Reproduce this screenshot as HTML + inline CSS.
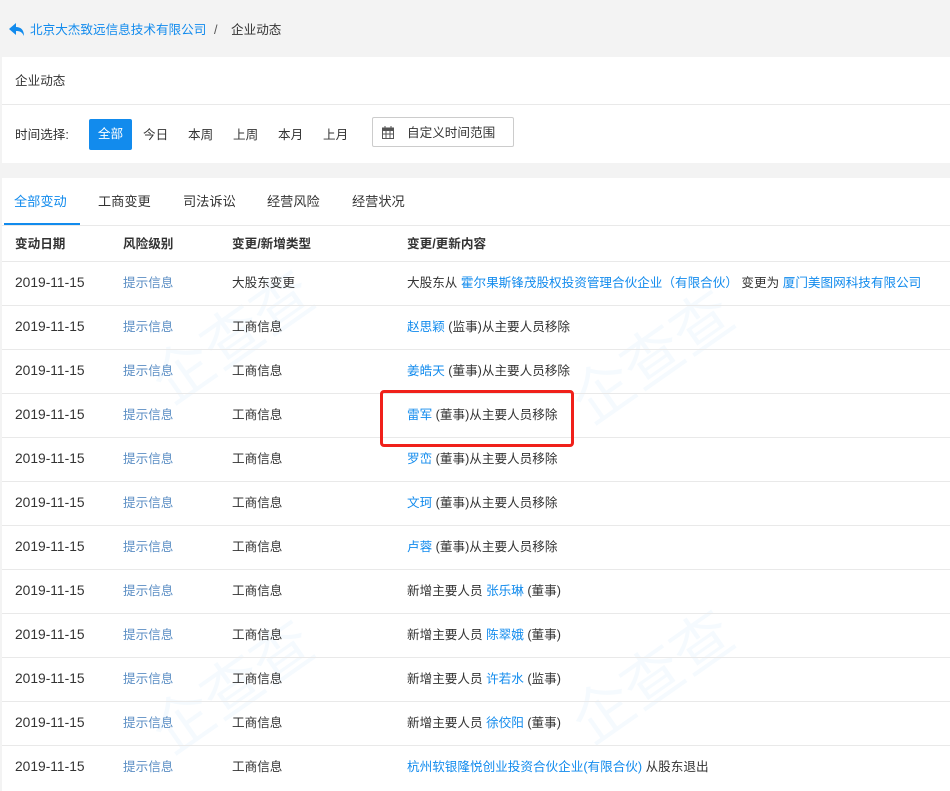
<!DOCTYPE html>
<html><head><meta charset="utf-8"><style>
*{margin:0;padding:0;box-sizing:border-box}
body{width:950px;height:791px;background:#f3f3f3;font-family:"Liberation Sans","Noto Sans CJK SC",sans-serif;font-size:12.6px;color:#333;position:relative;overflow:hidden}
.a{position:absolute;white-space:nowrap;line-height:18px}
.bl{color:#128bed}
.risk{color:#5b8ec4}
.d{font-size:13.8px}
.p{position:absolute;background:#fff;left:2px;right:0}
.hl{position:absolute;left:2px;right:0;height:1px;background:#e9e9e9}
.wm{position:absolute;color:#128bed;opacity:.035;font-size:60px;transform:rotate(-35deg)}
</style></head><body>
<svg class="a" style="left:9px;top:23px" width="16" height="14" viewBox="0 0 16 14"><path d="M0 6 L7 0 V4 C12 4 15 7 15 13 C13 9 11 8 7 8 V12 Z" fill="#128bed"/></svg>
<div class="a bl" style="left:30px;top:21px">北京大杰致远信息技术有限公司</div>
<div class="a" style="left:214px;top:21px;color:#555">/</div>
<div class="a" style="left:231px;top:21px">企业动态</div>

<div class="p" style="top:57px;height:106px"></div>
<div class="a" style="left:15px;top:72px">企业动态</div>
<div class="hl" style="top:104px"></div>
<div class="a" style="left:15px;top:126px">时间选择:</div>
<div class="a" style="left:89px;top:119px;width:43px;height:31px;background:#128bed;color:#fff;border-radius:2px;text-align:center;line-height:31px">全部</div>
<div class="a" style="left:143px;top:126px">今日</div>
<div class="a" style="left:188px;top:126px">本周</div>
<div class="a" style="left:233px;top:126px">上周</div>
<div class="a" style="left:278px;top:126px">本月</div>
<div class="a" style="left:323px;top:126px">上月</div>
<div class="a" style="left:372px;top:117px;width:142px;height:30px;border:1px solid #ccc;border-radius:2px"></div>
<svg class="a" style="left:382px;top:126px" width="12" height="13" viewBox="0 0 12 13"><rect x="0.5" y="2" width="11" height="10.5" fill="none" stroke="#555"/><rect x="0.5" y="2" width="11" height="3" fill="#555"/><path d="M3 0v3M9 0v3M0 8h12M4 5v8M8 5v8" stroke="#555"/></svg>
<div class="a" style="left:407px;top:124px">自定义时间范围</div>

<div class="p" style="top:178px;height:613px"></div>
<div class="a bl" style="left:14px;top:193px;font-size:13.2px">全部变动</div>
<div class="a" style="left:98px;top:193px;font-size:13.2px">工商变更</div>
<div class="a" style="left:183px;top:193px;font-size:13.2px">司法诉讼</div>
<div class="a" style="left:267px;top:193px;font-size:13.2px">经营风险</div>
<div class="a" style="left:352px;top:193px;font-size:13.2px">经营状况</div>
<div class="hl" style="top:225px"></div>
<div class="a" style="left:4px;top:223px;width:76px;height:2px;background:#128bed"></div>
<div class="a" style="left:15px;top:235px;font-weight:bold">变动日期</div>
<div class="a" style="left:123px;top:235px;font-weight:bold">风险级别</div>
<div class="a" style="left:232px;top:235px;font-weight:bold">变更/新增类型</div>
<div class="a" style="left:407px;top:235px;font-weight:bold">变更/更新内容</div>
<div class="hl" style="top:261px"></div>

<div class="wm" style="left:140px;top:290px">企查查</div>
<div class="wm" style="left:560px;top:310px">企查查</div>
<div class="wm" style="left:140px;top:640px">企查查</div>
<div class="wm" style="left:560px;top:630px">企查查</div>

<div id="rows"></div>
<script>
var c=[
'大股东从 <span class="bl">霍尔果斯锋茂股权投资管理合伙企业（有限合伙）</span> 变更为 <span class="bl">厦门美图网科技有限公司</span>',
'<span class="bl">赵思颖</span> (监事)从主要人员移除',
'<span class="bl">姜皓天</span> (董事)从主要人员移除',
'<span class="bl">雷军</span> (董事)从主要人员移除',
'<span class="bl">罗峦</span> (董事)从主要人员移除',
'<span class="bl">文珂</span> (董事)从主要人员移除',
'<span class="bl">卢蓉</span> (董事)从主要人员移除',
'新增主要人员 <span class="bl">张乐琳</span> (董事)',
'新增主要人员 <span class="bl">陈翠娥</span> (董事)',
'新增主要人员 <span class="bl">许若水</span> (监事)',
'新增主要人员 <span class="bl">徐佼阳</span> (董事)',
'<span class="bl">杭州软银隆悦创业投资合伙企业(有限合伙)</span> 从股东退出'];
var h='';
for(var i=0;i<12;i++){var t=274+i*44;
h+='<div class="a d" style="left:15px;top:'+t+'px">2019-11-15</div><div class="a risk" style="left:123px;top:'+t+'px">提示信息</div><div class="a" style="left:232px;top:'+t+'px">'+(i==0?'大股东变更':'工商信息')+'</div><div class="a" style="left:407px;top:'+t+'px">'+c[i]+'</div>';
if(i<11)h+='<div class="hl" style="top:'+(305+i*44)+'px"></div>';}
document.getElementById('rows').innerHTML=h;
</script>
<div class="a" style="left:380px;top:390px;width:194px;height:57px;border:3px solid #f0201a;border-radius:4px"></div>
</body></html>
